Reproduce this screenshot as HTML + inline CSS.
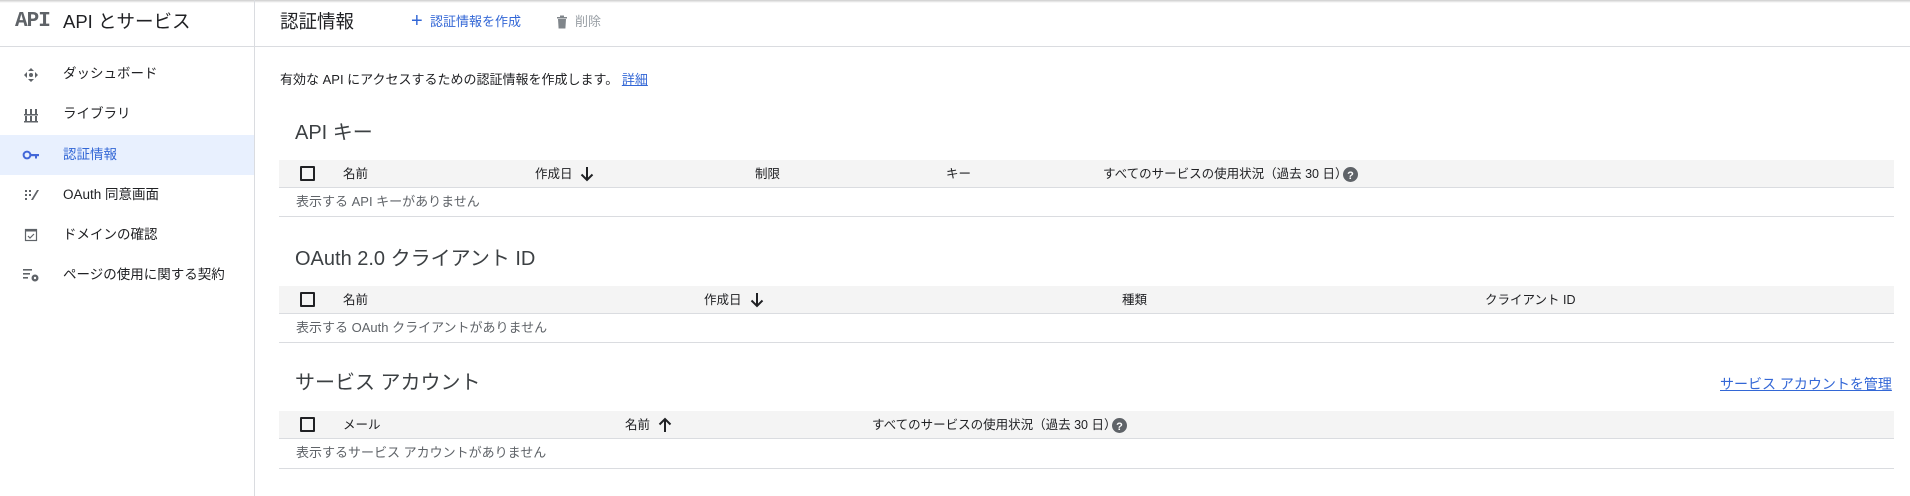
<!DOCTYPE html>
<html><head><meta charset="utf-8"><style>
*{margin:0;padding:0;box-sizing:border-box}
body{width:1910px;height:496px;overflow:hidden;background:#fff;font-family:"Liberation Sans","Noto Sans CJK JP",sans-serif;color:#202124;position:relative}
.a{position:absolute;white-space:nowrap}
.t{line-height:20px;height:20px}
.hl{position:absolute;height:1px;background:#dadce0}
.hdr{position:absolute;left:279px;width:1615px;background:#f4f4f4;border-bottom:1px solid #dadce0}
.cb{position:absolute;width:15px;height:15px;border:2px solid #202124;border-radius:1px}
.th{font-size:12.5px;color:#202124}
.emp{font-size:13px;color:#5f6368}
.h2{font-size:20px;color:#3c4043;line-height:28px}
.nav{font-size:13.5px;color:#202124}
.ic{position:absolute;left:22px;width:18px;height:18px}
.ar{position:absolute}
</style></head><body>
<div class="a" style="left:0;top:0;width:1910px;height:3px;background:linear-gradient(#ccc,#fff)"></div>
<div class="hl" style="left:0;top:46px;width:1910px"></div>
<div style="position:absolute;left:254px;top:0;width:1px;height:496px;background:#dadce0"></div>

<div class="a" style="left:15px;top:9px;font-family:'Liberation Mono',monospace;font-weight:bold;font-size:21px;color:#5f6368;line-height:26px;letter-spacing:-1px">API</div>
<div class="a" style="left:63px;top:10px;font-size:18.5px;line-height:24px;color:#202124">API とサービス</div>
<div class="a" style="left:280px;top:10px;font-size:18.5px;line-height:24px;color:#202124">認証情報</div>
<div class="a" style="left:411px;top:11px;font-size:20px;line-height:20px;color:#3367d6">+</div>
<div class="a t" style="left:430px;top:12px;font-size:13px;color:#3367d6">認証情報を作成</div>
<svg class="a" style="left:556px;top:15px" width="12" height="14" viewBox="0 0 12 14"><path d="M1 2h10v1.5H1z M4 0.5h4v1.5H4z M2 4h8l-0.6 9.5H2.6z" fill="#80868b"/></svg>
<div class="a t" style="left:575px;top:12px;font-size:13px;color:#9aa0a6">削除</div>

<!-- sidebar -->
<div class="a" style="left:0;top:135px;width:254px;height:40px;background:#e8f0fe"></div>
<svg class="ic" style="top:66px" viewBox="0 0 18 18"><g fill="#5f6368"><circle cx="9" cy="9" r="2"/><path d="M9 2l3 3H6zM9 16l-3-3h6zM2 9l3-3v6zM16 9l-3 3V6z"/></g></svg>
<svg class="ic" style="top:106px" viewBox="0 0 18 18"><g fill="#5f6368"><rect x="3" y="3" width="2" height="5"/><rect x="8" y="3" width="2" height="5"/><rect x="13" y="3" width="2" height="5"/><rect x="2" y="8" width="14" height="1.5"/><rect x="3" y="10" width="2" height="5"/><rect x="8" y="10" width="2" height="5"/><rect x="13" y="10" width="2" height="5"/><rect x="2" y="15" width="14" height="1.5"/></g></svg>
<svg class="ic" style="top:146px" viewBox="0 0 18 18"><g fill="#4267d8"><circle cx="5" cy="9" r="3.4" fill="none" stroke="#4267d8" stroke-width="2"/><rect x="8" y="8" width="9" height="2.2"/><rect x="13" y="9" width="2" height="3.5"/></g></svg>
<svg class="ic" style="top:186px" viewBox="0 0 18 18"><g fill="#5f6368"><rect x="3" y="4" width="2" height="2"/><rect x="7" y="4" width="2" height="2"/><rect x="3" y="8" width="2" height="2"/><rect x="7" y="8" width="2" height="2"/><rect x="3" y="12" width="2" height="2"/><path d="M15 4l-6 10h2l6-10z"/></g></svg>
<svg class="ic" style="top:226px" viewBox="0 0 18 18"><rect x="3.5" y="3.5" width="11" height="11" fill="none" stroke="#5f6368" stroke-width="1.2"/><rect x="3.5" y="3.5" width="11" height="2" fill="#5f6368"/><path d="M6 10l2 2 4-4" fill="none" stroke="#5f6368" stroke-width="1.2"/></svg>
<svg class="ic" style="top:266px" viewBox="0 0 18 18"><g fill="#5f6368"><rect x="1" y="3" width="9" height="1.6"/><rect x="1" y="7" width="7" height="1.6"/><rect x="1" y="11" width="5" height="1.6"/><circle cx="13" cy="12" r="3.5"/><circle cx="13" cy="12" r="1.2" fill="#fff"/></g></svg>
<div class="a t nav" style="left:63px;top:64px">ダッシュボード</div>
<div class="a t nav" style="left:63px;top:104px">ライブラリ</div>
<div class="a t nav" style="left:63px;top:145px;color:#3367d6">認証情報</div>
<div class="a t nav" style="left:63px;top:185px">OAuth 同意画面</div>
<div class="a t nav" style="left:63px;top:225px">ドメインの確認</div>
<div class="a t nav" style="left:63px;top:265px">ページの使用に関する契約</div>

<!-- main -->
<div class="a t" style="left:280px;top:70px;font-size:13px">有効な API にアクセスするための認証情報を作成します。 <span style="color:#3367d6;text-decoration:underline">詳細</span></div>

<div class="a h2" style="left:295px;top:119px">API キー</div>
<div class="hdr" style="top:160px;height:28px"></div>
<div class="cb" style="left:300px;top:166px"></div>
<div class="a t th" style="left:343px;top:164px">名前</div>
<div class="a t th" style="left:535px;top:164px">作成日</div>
<svg class="ar" style="left:580px;top:166px" width="14" height="16" viewBox="0 0 14 16"><path d="M7 1v13M1.5 8.5L7 14l5.5-5.5" fill="none" stroke="#202124" stroke-width="2"/></svg>
<div class="a t th" style="left:755px;top:164px">制限</div>
<div class="a t th" style="left:946px;top:164px">キー</div>
<div class="a t th" style="left:1103px;top:164px">すべてのサービスの使用状況（過去 30 日）</div>
<svg class="a" style="left:1343px;top:167px" width="15" height="15" viewBox="0 0 15 15"><circle cx="7.5" cy="7.5" r="7.5" fill="#5f6368"/><text x="7.5" y="12" text-anchor="middle" font-size="11" font-weight="bold" fill="#fff" font-family="Liberation Sans">?</text></svg>
<div class="a t emp" style="left:296px;top:192px">表示する API キーがありません</div>
<div class="hl" style="left:279px;top:216px;width:1615px"></div>

<div class="a h2" style="left:295px;top:245px">OAuth 2.0 クライアント ID</div>
<div class="hdr" style="top:286px;height:28px"></div>
<div class="cb" style="left:300px;top:292px"></div>
<div class="a t th" style="left:343px;top:290px">名前</div>
<div class="a t th" style="left:704px;top:290px">作成日</div>
<svg class="ar" style="left:750px;top:292px" width="14" height="16" viewBox="0 0 14 16"><path d="M7 1v13M1.5 8.5L7 14l5.5-5.5" fill="none" stroke="#202124" stroke-width="2"/></svg>
<div class="a t th" style="left:1122px;top:290px">種類</div>
<div class="a t th" style="left:1485px;top:290px">クライアント ID</div>
<div class="a t emp" style="left:296px;top:318px">表示する OAuth クライアントがありません</div>
<div class="hl" style="left:279px;top:342px;width:1615px"></div>

<div class="a h2" style="left:295px;top:369px">サービス アカウント</div>
<div class="a t" style="left:1720px;top:374px;font-size:14px;color:#3367d6;text-decoration:underline">サービス アカウントを管理</div>
<div class="hdr" style="top:411px;height:28px"></div>
<div class="cb" style="left:300px;top:417px"></div>
<div class="a t th" style="left:343px;top:415px">メール</div>
<div class="a t th" style="left:625px;top:415px">名前</div>
<svg class="ar" style="left:658px;top:417px" width="14" height="16" viewBox="0 0 14 16"><path d="M7 15V2M1.5 7.5L7 2l5.5 5.5" fill="none" stroke="#202124" stroke-width="2"/></svg>
<div class="a t th" style="left:872px;top:415px">すべてのサービスの使用状況（過去 30 日）</div>
<svg class="a" style="left:1112px;top:418px" width="15" height="15" viewBox="0 0 15 15"><circle cx="7.5" cy="7.5" r="7.5" fill="#5f6368"/><text x="7.5" y="12" text-anchor="middle" font-size="11" font-weight="bold" fill="#fff" font-family="Liberation Sans">?</text></svg>
<div class="a t emp" style="left:296px;top:443px">表示するサービス アカウントがありません</div>
<div class="hl" style="left:279px;top:468px;width:1615px"></div>
</body></html>
